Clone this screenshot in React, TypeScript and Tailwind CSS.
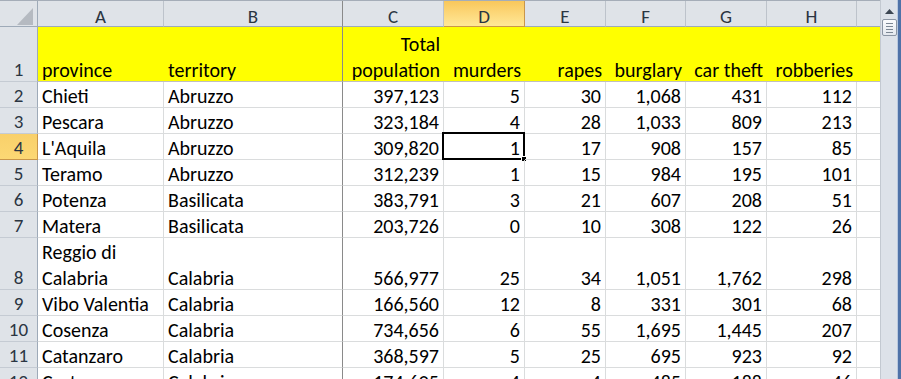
import React from 'react';

const cols = ['A', 'B', 'C', 'D', 'E', 'F', 'G', 'H', ''];

type Row = {
  n: number;
  province: string[];
  territory: string;
  vals: string[];
};

const rows: Row[] = [
  { n: 2, province: ['Chieti'], territory: 'Abruzzo', vals: ['397,123', '5', '30', '1,068', '431', '112'] },
  { n: 3, province: ['Pescara'], territory: 'Abruzzo', vals: ['323,184', '4', '28', '1,033', '809', '213'] },
  { n: 4, province: ["L'Aquila"], territory: 'Abruzzo', vals: ['309,820', '1', '17', '908', '157', '85'] },
  { n: 5, province: ['Teramo'], territory: 'Abruzzo', vals: ['312,239', '1', '15', '984', '195', '101'] },
  { n: 6, province: ['Potenza'], territory: 'Basilicata', vals: ['383,791', '3', '21', '607', '208', '51'] },
  { n: 7, province: ['Matera'], territory: 'Basilicata', vals: ['203,726', '0', '10', '308', '122', '26'] },
  { n: 8, province: ['Reggio di', 'Calabria'], territory: 'Calabria', vals: ['566,977', '25', '34', '1,051', '1,762', '298'] },
  { n: 9, province: ['Vibo Valentia'], territory: 'Calabria', vals: ['166,560', '12', '8', '331', '301', '68'] },
  { n: 10, province: ['Cosenza'], territory: 'Calabria', vals: ['734,656', '6', '55', '1,695', '1,445', '207'] },
  { n: 11, province: ['Catanzaro'], territory: 'Calabria', vals: ['368,597', '5', '25', '695', '923', '92'] },
  { n: 12, province: ['Crotone'], territory: 'Calabria', vals: ['174,605', '4', '4', '485', '188', '46'] },
];

const font = { fontFamily: 'Carlito, Lato, "Open Sans", sans-serif' };

function ColHeader({ label, last }: { label: string; last?: boolean }) {
  const active = label === 'D';
  return (
    <div
      className={
        'flex items-center justify-center pt-[6px] text-[19px] leading-[20px] h-[26px] border-b ' +
        (active
          ? 'bg-gradient-to-b from-[#f9c75a] to-[#ffe897] border-[#c9964a] border-r text-[#2b3542]'
          : 'bg-[#dfe3e8] border-b-[#9eaab8] text-[#2b3542] ' +
            (label === 'B' ? 'border-r border-r-[#8a8a8a]' : last ? '' : 'border-r border-r-[#bdc3cb]'))
      }
    >
      {label}
    </div>
  );
}

export default function App() {
  return (
    <div className="w-[901px] h-[379px] overflow-hidden bg-white flex" style={font}>
      <div className="flex-1 flex flex-col">
        <div className="h-[3px] bg-[#e6e9ee] border-b border-[#a5adb8]" />
        <div className="grid grid-cols-[38px_126px_179px_101px_81px_81px_80px_81px_90px_1fr] text-[20px]">
          {/* header */}
          <div className="h-[26px] bg-[#dfe3e8] border-r border-b border-[#9eaab8] relative">
            <svg className="absolute left-[17px] top-[7px]" width="16" height="17" viewBox="0 0 16 17">
              <polygon points="16,0 16,17 0,17" fill="#b5bac1" />
            </svg>
          </div>
          {cols.map((c, i) => (
            <ColHeader key={i} label={c} last={i === cols.length - 1} />
          ))}

          {/* row 1 */}
          <div className="h-[55px] bg-[#dfe3e8] border-r border-r-[#9eaab8] border-b border-b-[#c5cbd3] flex items-end justify-center text-[19px] text-[#2b3542] leading-[26px]">
            <span className="-mb-[2px]">1</span>
          </div>
          <div className="h-[55px] bg-[#ffff00] border-b border-[#bfbfbf] flex items-end pl-[4px] leading-[26px]">
            <span className="-mb-[2px]">province</span>
          </div>
          <div className="h-[55px] bg-[#ffff00] border-b border-r border-b-[#bfbfbf] border-r-[#8a8a8a] flex items-end pl-[4px] leading-[26px]">
            <span className="-mb-[2px]">territory</span>
          </div>
          <div className="h-[55px] bg-[#ffff00] border-b border-[#bfbfbf] flex flex-col justify-end items-end pr-[4px] leading-[26px]">
            <span>Total</span>
            <span className="-mb-[2px]">population</span>
          </div>
          {['murders', 'rapes', 'burglary', 'car theft', 'robberies'].map((h) => (
            <div
              key={h}
              className="h-[55px] bg-[#ffff00] border-b border-[#bfbfbf] flex items-end justify-end pr-[4px] leading-[26px] whitespace-nowrap"
            >
              <span className="-mb-[2px]">{h}</span>
            </div>
          ))}
          <div className="h-[55px] bg-[#ffff00] border-b border-[#bfbfbf]" />

          {/* data rows */}
          {rows.map((r) => {
            const h = r.province.length > 1 ? 'h-[52px]' : 'h-[26px]';
            const sel = r.n === 4;
            return (
              <React.Fragment key={r.n}>
                <div
                  className={
                    h +
                    ' border-r border-b flex items-end justify-center text-[19px] leading-[26px] text-[#2b3542] ' +
                    (sel
                      ? 'bg-gradient-to-b from-[#f9d06a] to-[#fcd874] border-r-[#c9964a] border-b-[#c9964a]'
                      : 'bg-[#dfe3e8] border-r-[#9eaab8] border-b-[#c5cbd3]')
                  }
                >
                  <span className="-mb-[2px]">{r.n}</span>
                </div>
                <div className={h + ' border-r border-b border-[#dadcdd] flex flex-col justify-end pl-[4px] leading-[26px] whitespace-nowrap'}>
                  {r.province.map((p, i) => (
                    <span key={p} className={i === r.province.length - 1 ? '-mb-[2px]' : ''}>
                      {p}
                    </span>
                  ))}
                </div>
                <div className={h + ' border-r border-b border-b-[#dadcdd] border-r-[#8a8a8a] flex items-end pl-[4px] leading-[26px]'}>
                  <span className="-mb-[2px]">{r.territory}</span>
                </div>
                {r.vals.map((v, i) => (
                  <div
                    key={i}
                    className={h + ' relative border-r border-b border-[#dadcdd] flex items-end justify-end pr-[4px] leading-[26px]'}
                  >
                    <span className="-mb-[2px]">{v}</span>
                    {sel && i === 1 && (
                      <div className="absolute -left-[2px] -top-[2px] -right-[1px] -bottom-[1px] border-2 border-black">
                        <div className="absolute -right-[4px] -bottom-[4px] w-[6px] h-[6px] bg-black border border-white" />
                      </div>
                    )}
                  </div>
                ))}
                <div className={h + ' border-b border-[#dadcdd]'} />
              </React.Fragment>
            );
          })}
        </div>
      </div>

      {/* scrollbar */}
      <div className="w-[17px] h-full bg-[#dde2e9] border-l border-[#c3c9d1] flex flex-col items-center">
        <svg className="mt-[9px]" width="9" height="5" viewBox="0 0 9 5">
          <polygon points="4.5,0 9,5 0,5" fill="#3c4652" />
        </svg>
        <div className="mt-[5px] w-[15px] h-[17px] bg-gradient-to-b from-[#fbfcfd] to-[#e4e8ee] border border-[#8b95a3] rounded-[2px] flex flex-col items-center justify-center gap-[2px]">
          <div className="w-[7px] h-[1px] bg-[#7c8794]" />
          <div className="w-[7px] h-[1px] bg-[#7c8794]" />
          <div className="w-[7px] h-[1px] bg-[#7c8794]" />
          <div className="w-[7px] h-[1px] bg-[#7c8794]" />
        </div>
      </div>
      <div className="w-[1px] h-full bg-[#b9c9df]" />
      <div className="w-[3px] h-full bg-[#4f72a8]" />
    </div>
  );
}
